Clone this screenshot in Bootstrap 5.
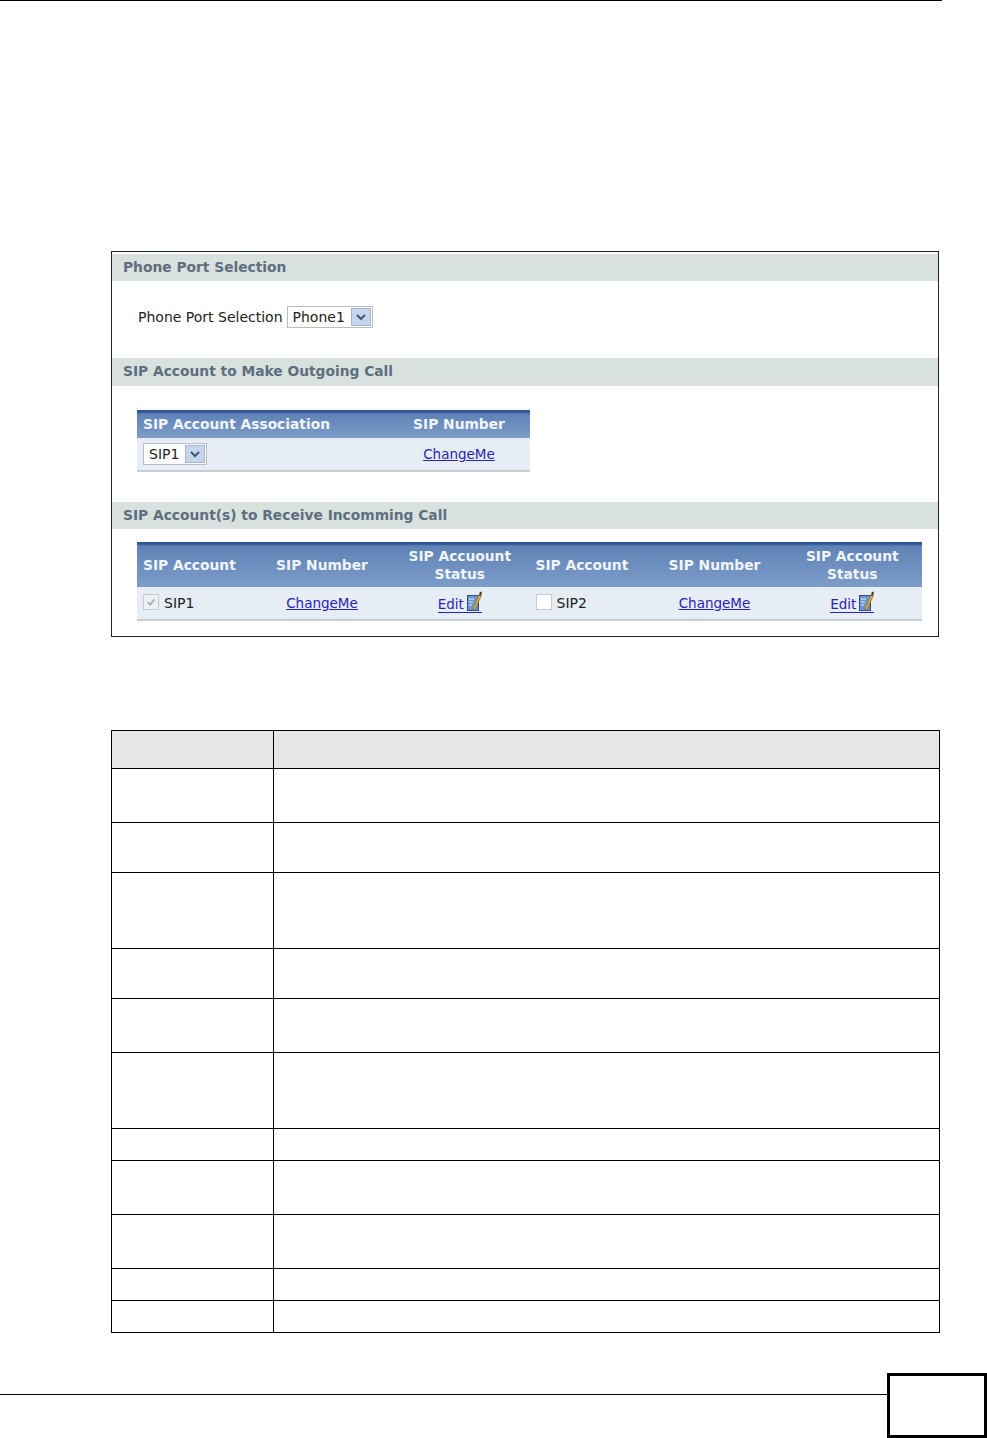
<!DOCTYPE html>
<html lang="en">
<head>
  <meta charset="UTF-8" />
  <title>Phone Port Selection</title>
  <link href="https://cdn.jsdelivr.net/npm/bootstrap@5.3.0/dist/css/bootstrap.min.css" rel="stylesheet">
  <style>
    html, body { height: 1438px; overflow: hidden; }
    body { background: #fff; font-family: "DejaVu Sans", sans-serif; color: #222; }
    .top-rule { width: 942px; height: 1px; background: #000; }
    .page-area { padding-left: 111px; padding-right: 48px; }

    .screen-card { margin-top: 250px; height: 386px; border: 1px solid #222; border-radius: 0; padding-top: 2px; }
    .sec-bar { height: 28px; background: #d9e1de; color: #5d6e80; font-weight: 700; font-size: 13.8px; line-height: 27px; padding-left: 11px; }
    .sec-bar-short { height: 27px; }
    .sec-one { height: 77px; padding-left: 26px; padding-bottom: 5px; font-size: 14px; }
    .sec-two { height: 116px; padding: 24px 0 0 25px; }
    .sec-three { height: 107px; padding: 13px 15px 0 25px; }

    .fake-select { display: inline-flex; align-items: center; height: 22px; border: 1px solid #b9bdc2; background: #fff; padding: 0 1px 0 5px; gap: 5px; }
    .fake-select select { appearance: none; border: 0; padding: 0; background: transparent; font: inherit; color: #222; outline: 0; }
    .sel-arrow { display: block; width: 20px; height: 18px; }

    .blue-table { table-layout: fixed; border-collapse: collapse; margin: 0; font-size: 14px; }
    .blue-table th { --bs-table-bg: transparent; background: transparent; color: #f1f5fa; font-weight: 700; font-size: 13.8px; line-height: 18px; text-align: center; vertical-align: middle; padding: 0 6px; border: 0; }
    .blue-table thead tr { background: linear-gradient(#2f5592 0, #2f5592 2px, #5f83b6 4px, #7d9cc9 100%); }
    .blue-table td { --bs-table-bg: transparent; background: #e6edf5; color: #222; text-align: center; vertical-align: middle; padding: 0 6px; border: 0; border-bottom: 2px solid #c9cdd1; }
    .blue-table th.cell-left, .blue-table td.cell-left { text-align: left; }
    .blue-table a { color: #2a24b4; font-size: 13.5px; }
    .assoc-table { width: 393px; }
    .assoc-table thead tr { height: 28px; }
    .assoc-table tbody tr { height: 33px; }
    .recv-table { width: 785px; }
    .recv-table thead tr { height: 45px; }
    .recv-table tbody tr { height: 33px; }
    .col-a { width: 117px; }
    .col-b { width: 136px; }

    .edit-link { display: inline-flex; align-items: flex-end; gap: 1px; text-decoration: none; border-bottom: 1px solid #2a24b4; line-height: 16px; }
    .edit-link svg { width: 17px; height: 21px; }
    .sip-check.form-check-input { width: 16px; height: 16px; margin: 0 5px 0 0; border: 1px solid #c6cbd0; border-radius: 0; background-color: #fff; opacity: 1; vertical-align: -2px; }
    .sip-check.form-check-input:checked { background-color: #eef1f4; background-image: url("data:image/svg+xml,%3csvg xmlns='http://www.w3.org/2000/svg' viewBox='0 0 16 16'%3e%3cpath fill='none' stroke='%23a9b0b6' stroke-width='2' d='M4 8l3 3 5-6'/%3e%3c/svg%3e"); }

    .desc-table { width: 829px; margin-top: 93px; margin-bottom: 0; table-layout: fixed; border-color: #000; }
    .desc-table > :not(caption) > * > * { padding: 0; border-color: #000; }
    .desc-table th { --bs-table-bg: #e6e6e6; background: #e6e6e6; }
    .first-col { width: 162px; }
    .row-38 { height: 38px; }
    .row-54 { height: 54px; }
    .row-50 { height: 50px; }
    .row-76 { height: 76px; }
    .row-32 { height: 32px; }

    .page-foot { margin-top: 40px; }
    .foot-rule { height: 1px; margin-top: 21px; background: #000; }
    .page-box { width: 100px; height: 65px; border: 3px solid #000; }
  </style>
</head>
<body>
  <div class="top-rule"></div>

  <div class="page-area">
    <div class="card screen-card">
      <div class="sec-bar sec-bar-short">Phone Port Selection</div>
      <div class="sec-one d-flex align-items-center gap-1">
        <label for="phonePort">Phone Port Selection</label>
        <span class="fake-select">
          <select id="phonePort"><option>Phone1</option></select>
          <svg class="sel-arrow" viewBox="0 0 20 18"><rect x="0.5" y="0.5" width="19" height="17" fill="#c5d5ec" stroke="#a3b5cf"/><path d="M6 7l4 4 4-4" fill="none" stroke="#44567a" stroke-width="2"/></svg>
        </span>
      </div>

      <div class="sec-bar">SIP Account to Make Outgoing Call</div>
      <div class="sec-two">
        <table class="table blue-table assoc-table">
          <colgroup><col><col style="width:142px"></colgroup>
          <thead>
            <tr><th class="cell-left">SIP Account Association</th><th>SIP Number</th></tr>
          </thead>
          <tbody>
            <tr>
              <td class="cell-left">
                <span class="fake-select">
                  <select aria-label="SIP Account"><option>SIP1</option></select>
                  <svg class="sel-arrow" viewBox="0 0 20 18"><rect x="0.5" y="0.5" width="19" height="17" fill="#c5d5ec" stroke="#a3b5cf"/><path d="M6 7l4 4 4-4" fill="none" stroke="#44567a" stroke-width="2"/></svg>
                </span>
              </td>
              <td><a href="#">ChangeMe</a></td>
            </tr>
          </tbody>
        </table>
      </div>

      <div class="sec-bar sec-bar-short">SIP Account(s) to Receive Incomming Call</div>
      <div class="sec-three">
        <table class="table blue-table recv-table">
          <colgroup>
            <col class="col-a"><col class="col-b"><col>
            <col class="col-a"><col class="col-b"><col>
          </colgroup>
          <thead>
            <tr>
              <th class="cell-left">SIP Account</th><th>SIP Number</th><th>SIP Accuount<br>Status</th>
              <th class="cell-left">SIP Account</th><th>SIP Number</th><th>SIP Account<br>Status</th>
            </tr>
          </thead>
          <tbody>
            <tr>
              <td class="cell-left"><input class="form-check-input sip-check" type="checkbox" checked disabled aria-label="SIP1">SIP1</td>
              <td><a href="#">ChangeMe</a></td>
              <td><a href="#" class="edit-link">Edit<svg viewBox="0 0 17 21"><rect x="2.5" y="4.5" width="11" height="15" fill="#6d94d2" stroke="#2a4f96"/><path d="M4 8h5M4 11h4M4 14h3" stroke="#eef3fc"/><path d="M8 17L14 4l2.2 1-6 13-2.2 1z" fill="#e3ad2f" stroke="#7a5a1a" stroke-width=".5"/><path d="M14 4l1-3.5 2 1-.8 3.5z" fill="#5a3a1a"/></svg></a></td>
              <td class="cell-left"><input class="form-check-input sip-check" type="checkbox" disabled aria-label="SIP2">SIP2</td>
              <td><a href="#">ChangeMe</a></td>
              <td><a href="#" class="edit-link">Edit<svg viewBox="0 0 17 21"><rect x="2.5" y="4.5" width="11" height="15" fill="#6d94d2" stroke="#2a4f96"/><path d="M4 8h5M4 11h4M4 14h3" stroke="#eef3fc"/><path d="M8 17L14 4l2.2 1-6 13-2.2 1z" fill="#e3ad2f" stroke="#7a5a1a" stroke-width=".5"/><path d="M14 4l1-3.5 2 1-.8 3.5z" fill="#5a3a1a"/></svg></a></td>
            </tr>
          </tbody>
        </table>
      </div>
    </div>

    <table class="table table-bordered desc-table">
      <colgroup><col class="first-col"><col></colgroup>
      <thead><tr class="row-38"><th></th><th></th></tr></thead>
      <tbody>
        <tr class="row-54"><td></td><td></td></tr>
        <tr class="row-50"><td></td><td></td></tr>
        <tr class="row-76"><td></td><td></td></tr>
        <tr class="row-50"><td></td><td></td></tr>
        <tr class="row-54"><td></td><td></td></tr>
        <tr class="row-76"><td></td><td></td></tr>
        <tr class="row-32"><td></td><td></td></tr>
        <tr class="row-54"><td></td><td></td></tr>
        <tr class="row-54"><td></td><td></td></tr>
        <tr class="row-32"><td></td><td></td></tr>
        <tr class="row-32"><td></td><td></td></tr>
      </tbody>
    </table>
  </div>

  <div class="page-foot d-flex align-items-start">
    <div class="foot-rule flex-grow-1"></div>
    <div class="page-box"></div>
  </div>
  <script src="https://cdn.jsdelivr.net/npm/bootstrap@5.3.0/dist/js/bootstrap.bundle.min.js"></script>
</body>
</html>
